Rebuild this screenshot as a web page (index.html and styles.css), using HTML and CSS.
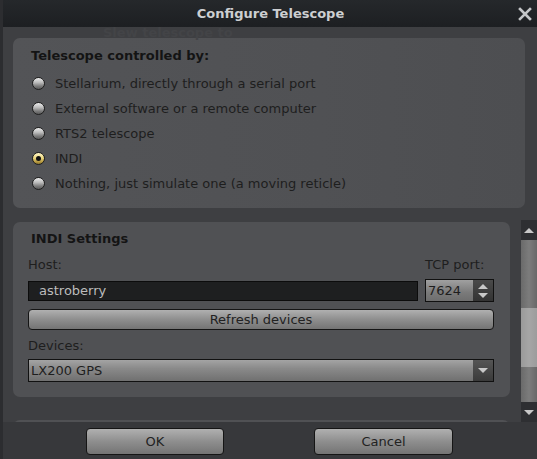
FILE: index.html
```html
<!DOCTYPE html>
<html>
<head>
<meta charset="utf-8">
<link rel="stylesheet" href="styles.css">
</head>
<body>
<div class="dialog">
  <div class="titlebar">
    <span class="title">Configure Telescope</span>
    <svg class="close" width="14" height="14" viewBox="0 0 14 14"><path d="M2 2 L12 12 M12 2 L2 12" stroke="#c4c6c8" stroke-width="2.6" stroke-linecap="square"/></svg>
  </div>
  <div class="ghost">Slew telescope to</div>
  <div class="content">
    <div class="group group-top">
      <div class="heading">Telescope controlled by:</div>
      <div class="radios">
        <div class="radio"><span class="dot"></span>Stellarium, directly through a serial port</div>
        <div class="radio"><span class="dot"></span>External software or a remote computer</div>
        <div class="radio"><span class="dot"></span>RTS2 telescope</div>
        <div class="radio"><span class="dot on"></span>INDI</div>
        <div class="radio"><span class="dot"></span>Nothing, just simulate one (a moving reticle)</div>
      </div>
    </div>
    <div class="scrollarea">
      <div class="viewport">
        <div class="group group-indi">
          <div class="heading h2">INDI Settings</div>
          <div class="hostgrid">
            <div class="label">Host:</div>
            <div class="label">TCP port:</div>
            <div class="input">astroberry</div>
            <div class="spin"><span class="spinval">7624</span><span class="spinbtns"><span class="up"></span><span class="down"></span></span></div>
          </div>
          <div class="button wide">Refresh devices</div>
          <div class="label devlabel">Devices:</div>
          <div class="combo"><span class="comboval">LX200 GPS</span><span class="comboarrow"><span class="down"></span></span></div>
        </div>
        <div class="group group-next"></div>
      </div>
      <div class="scrollbar">
        <div class="sbtn"><span class="up"></span></div>
        <div class="track"><div class="handle"></div></div>
        <div class="sbtn"><span class="down"></span></div>
      </div>
    </div>
  </div>
  <div class="bottombar">
    <div class="button btn-ok">OK</div>
    <div class="button btn-cancel">Cancel</div>
  </div>
</div>
</body>
</html>
```
FILE: styles.css
```css
html, body {
  margin: 0;
  padding: 0;
  background: #2c2d30;
}
body {
  font-family: "DejaVu Sans", "Liberation Sans", sans-serif;
  font-size: 13px;
  color: #1c1c1c;
}
.dialog {
  position: relative;
  width: 534px;
  height: 459px;
  margin-left: 3px;
  background: #3e3f42;
  display: flex;
  flex-direction: column;
  overflow: hidden;
}
.titlebar {
  height: 27px;
  background: linear-gradient(#25282b, #1d1f22);
  display: flex;
  align-items: center;
  justify-content: center;
  position: relative;
  flex: none;
}
.title {
  color: #cdcfd1;
  font-weight: bold;
  font-size: 13px;
  margin-left: 1px;
}
.close {
  position: absolute;
  right: 5px;
  top: 7px;
}
.ghost {
  position: absolute;
  left: 100px;
  top: 25px;
  font-weight: bold;
  font-size: 13px;
  color: #434447;
}
.content {
  flex: 1;
  display: flex;
  flex-direction: column;
  padding-left: 10px;
}
.group {
  background: #505154;
  border-radius: 7px;
}
.group-top {
  margin-top: 11px;
  width: 512px;
  height: 170px;
  box-sizing: border-box;
  padding: 9px 0 0 18px;
  background: linear-gradient(90deg, #535457 0%, #505154 60%, #4d4e51 100%);
}
.heading {
  font-weight: bold;
  line-height: 18px;
  color: #141414;
}
.radios {
  margin-top: 6px;
  display: flex;
  flex-direction: column;
}
.radio {
  height: 25px;
  display: flex;
  align-items: center;
  color: #1e1e1e;
}
.dot {
  width: 13px;
  height: 13px;
  box-sizing: border-box;
  border-radius: 50%;
  border: 1px solid #1e1e1e;
  background: linear-gradient(#ececec 0%, #bdbdbd 40%, #7a7a7a 75%, #5a5a5a 100%);
  margin: 0 10px 0 1px;
  display: inline-flex;
  align-items: center;
  justify-content: center;
  flex: none;
}
.dot.on {
  background: linear-gradient(#fff6c8 0%, #ecd880 45%, #b89a40 80%, #8a7430 100%);
}
.dot.on::after {
  content: "";
  width: 5px;
  height: 5px;
  border-radius: 50%;
  background: #111;
}
.scrollarea {
  margin-top: 12px;
  height: 202px;
  display: flex;
}
.viewport {
  flex: 1;
  overflow: hidden;
  padding-top: 2px;
}
.group-indi {
  width: 497px;
  height: 175px;
  box-sizing: border-box;
  padding: 8px 0 0 15px;
}
.h2 {
  padding-left: 3px;
}
.label {
  color: #1e1e1e;
  line-height: 16px;
}
.hostgrid {
  margin-top: 9px;
  display: grid;
  grid-template-columns: 390px 69px;
  column-gap: 7px;
  row-gap: 6px;
  align-items: center;
}
.input {
  height: 20px;
  box-sizing: border-box;
  background: #1e1f20;
  border: 1px solid #0c0c0c;
  color: #bcbcbc;
  padding-left: 10px;
  line-height: 18px;
}
.spin {
  height: 23px;
  box-sizing: border-box;
  border: 1px solid #111;
  display: flex;
  background: linear-gradient(#a0a0a0, #7a7a7a 60%, #6e6e6e);
}
.spinval {
  flex: 1;
  color: #1e1e1e;
  line-height: 21px;
  padding-left: 2px;
}
.spinbtns {
  width: 20px;
  background: linear-gradient(#4a4a4a, #333);
  display: flex;
  flex-direction: column;
  align-items: center;
  justify-content: center;
  gap: 4px;
}
.up {
  width: 0;
  height: 0;
  border-left: 5px solid transparent;
  border-right: 5px solid transparent;
  border-bottom: 5px solid #c8c8c8;
}
.down {
  width: 0;
  height: 0;
  border-left: 5px solid transparent;
  border-right: 5px solid transparent;
  border-top: 5px solid #c8c8c8;
}
.button {
  box-sizing: border-box;
  border: 1px solid #151515;
  border-radius: 4px;
  background: linear-gradient(#b0b0b0, #8e8e8e 50%, #747474);
  color: #222;
  display: flex;
  align-items: center;
  justify-content: center;
}
.wide {
  width: 466px;
  height: 21px;
  margin-top: 7px;
}
.devlabel {
  margin-top: 8px;
}
.combo {
  margin-top: 5px;
  width: 466px;
  height: 23px;
  box-sizing: border-box;
  border: 1px solid #111;
  display: flex;
  background: linear-gradient(#a4a4a4, #8a8a8a 40%, #707070);
}
.comboval {
  flex: 1;
  line-height: 21px;
  padding-left: 2px;
  color: #1e1e1e;
}
.comboarrow {
  width: 20px;
  background: linear-gradient(#555, #3a3a3a);
  display: flex;
  align-items: center;
  justify-content: center;
}
.group-next {
  margin-top: 23px;
  width: 497px;
  height: 30px;
}
.scrollbar {
  width: 16px;
  display: flex;
  flex-direction: column;
}
.sbtn {
  height: 20px;
  background: #2e2f32;
  display: flex;
  align-items: center;
  justify-content: center;
  flex: none;
}
.track {
  flex: 1;
  background: linear-gradient(90deg, #6a6a6a, #7c7c7c 50%, #686868);
  padding-top: 68px;
}
.handle {
  height: 59px;
  background: linear-gradient(90deg, #9a9a9a, #a6a6a6 50%, #9c9c9c);
}
.bottombar {
  height: 37px;
  flex: none;
  background: #37383b;
  position: relative;
  display: flex;
  align-items: flex-start;
  padding-top: 6px;
  box-sizing: border-box;
}
.btn-ok {
  margin-left: 83px;
  width: 138px;
  height: 27px;
}
.btn-cancel {
  margin-left: 90px;
  width: 139px;
  height: 27px;
}
```
